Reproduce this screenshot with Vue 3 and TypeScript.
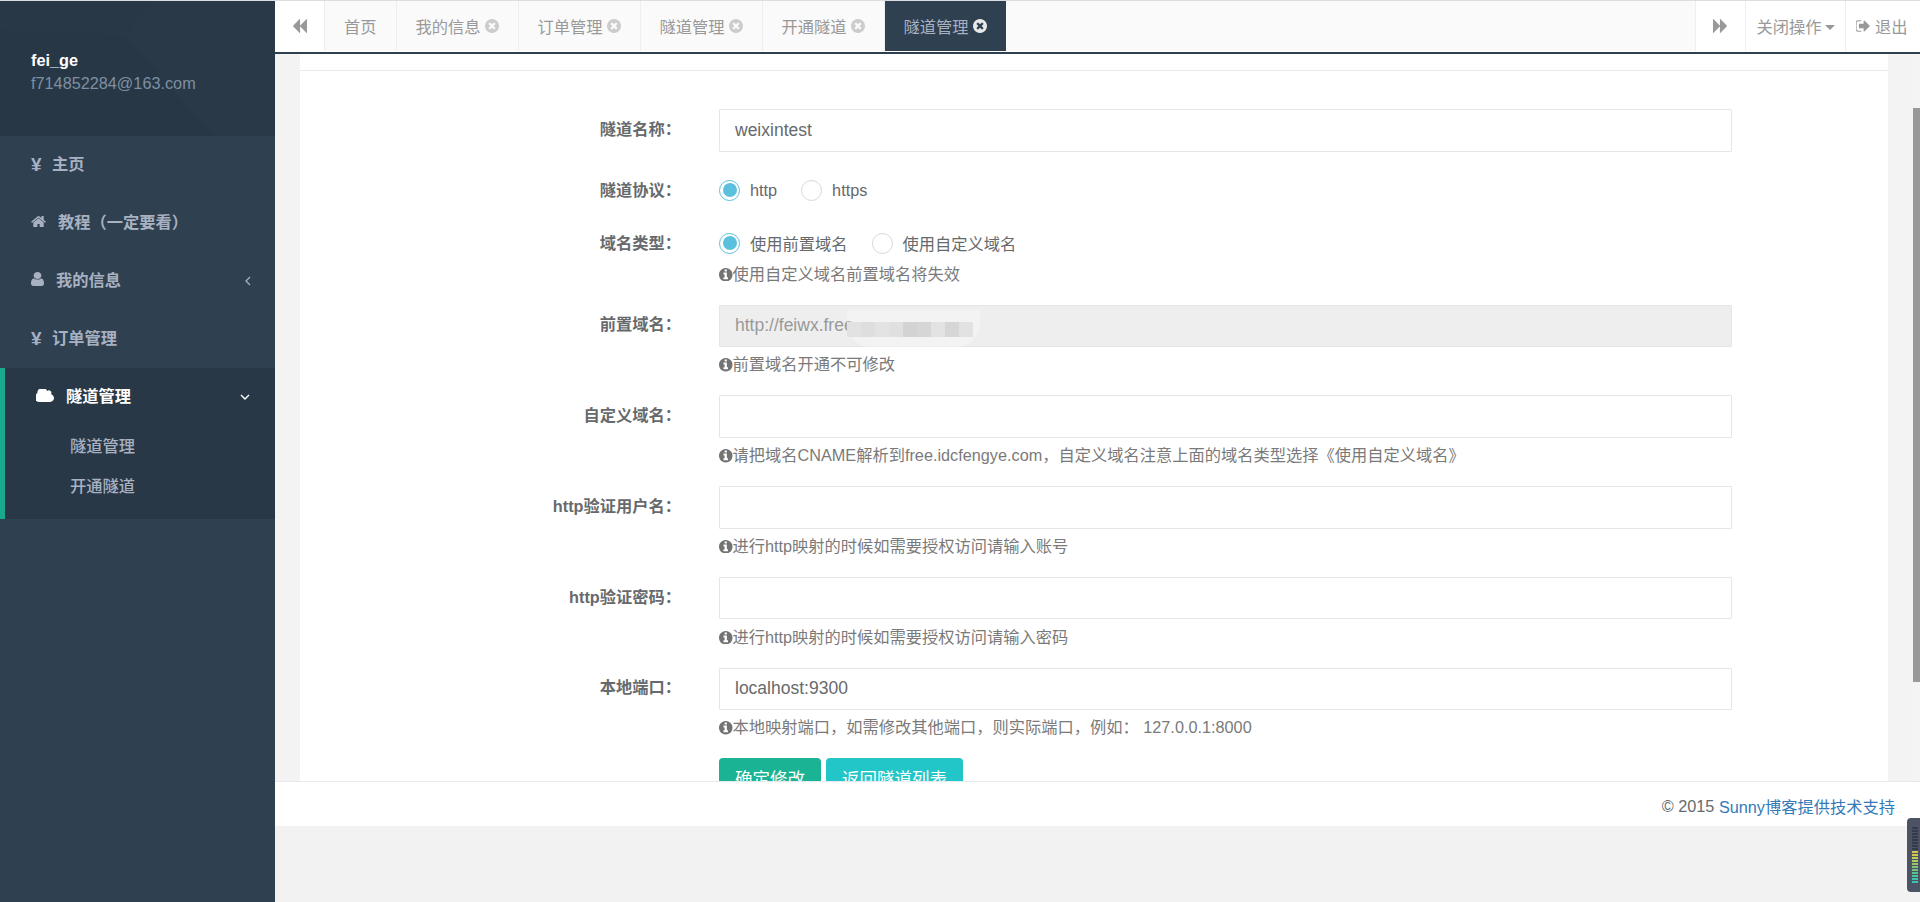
<script setup lang="ts">
interface Tab { label: string; closable: boolean; active?: boolean }
const tabs: Tab[] = [
  { label: '首页', closable: false },
  { label: '我的信息', closable: true },
  { label: '订单管理', closable: true },
  { label: '隧道管理', closable: true },
  { label: '开通隧道', closable: true },
  { label: '隧道管理', closable: true, active: true },
]
const mosaic = ['#e2e2e2', '#dedede', '#e3e3e3', '#e0e0e0', '#d3d3d3', '#d6d6d6', '#e3e3e3', '#d6d6d6', '#e2e2e2']
const leds = ['#333a4a','#333a4a','#333a4a','#333a4a','#333a4a','#333a4a','#333a4a','#333a4a','#d8c44a','#d4c84e','#c7cc55','#aecb5d','#98c668','#84c474','#70c280','#5cc28c','#4cc39a','#40c4a8','#35c5b0']
const I = {
  close: 'M1277 1122q0-26-19-45l-181-181 181-181q19-19 19-45 0-27-19-46l-90-90q-19-19-46-19-26 0-45 19l-181 181-181-181q-19-19-45-19-27 0-46 19l-90 90q-19 19-19 46 0 26 19 45l181 181-181 181q-19 19-19 45 0 27 19 46l90 90q19 19 46 19 26 0 45-19l181-181 181 181q19 19 45 19 27 0 46-19l90-90q19-19 19-46zm387-226q0 209-103 385.5t-279.5 279.5-385.5 103-385.5-103-279.5-279.5-103-385.5 103-385.5 279.5-279.5 385.5-103 385.5 103 279.5 279.5 103 385.5z',
  info: 'M1152 1376v-160q0-14-9-23t-23-9h-96v-512q0-14-9-23t-23-9h-320q-14 0-23 9t-9 23v160q0 14 9 23t23 9h96v320h-96q-14 0-23 9t-9 23v160q0 14 9 23t23 9h448q14 0 23-9t9-23zm-128-896v-160q0-14-9-23t-23-9h-192q-14 0-23 9t-9 23v160q0 14 9 23t23 9h192q14 0 23-9t9-23zm640 416q0 209-103 385.5t-279.5 279.5-385.5 103-385.5-103-279.5-279.5-103-385.5 103-385.5 279.5-279.5 385.5-103 385.5 103 279.5 279.5 103 385.5z',
  home: 'M1472 992v480q0 26-19 45t-45 19h-384v-384h-256v384h-384q-26 0-45-19t-19-45v-480q0-1 .5-3t.5-3l575-474 575 474q1 2 1 6zm223-69l-62 74q-8 9-21 11h-3q-13 0-21-7l-692-577-692 577q-12 8-24 7-13-2-21-11l-62-74q-8-10-7-23.5t11-22.5l719-599q32-26 76-26t76 26l244 204v-195q0-14 9-23t23-9h192q14 0 23 9t9 23v408l219 182q10 8 11 21.5t-7 23.5z',
  user: 'M1536 1399q0 109-62.5 187t-150.5 78h-854q-88 0-150.5-78t-62.5-187q0-85 8.5-160.5t31.5-152 58.5-131 94-89 134.5-34.5q131 128 313 128t313-128q76 0 134.5 34.5t94 89 58.5 131 31.5 152 8.5 160.5zm-256-887q0 159-112.5 271.5t-271.5 112.5-271.5-112.5-112.5-271.5 112.5-271.5 271.5-112.5 271.5 112.5 112.5 271.5z',
  cloud: 'M1856 1152q0 159-112.5 271.5t-271.5 112.5h-1088q-185 0-316.5-131.5t-131.5-316.5q0-132 71-241.5t187-163.5q-2-28-2-43 0-212 150-362t362-150q158 0 286.5 88t187.5 230q70-62 166-62 106 0 181 75t75 181q0 75-41 138 129 30 213 134.5t84 239.5z',
  back: 'M1683 141q19-19 32-13t13 32v1472q0 26-13 32t-32-13l-710-710q-9-9-13-19v710q0 26-13 32t-32-13l-710-710q-19-19-19-45t19-45l710-710q19-19 32-13t13 32v710q4-10 13-19z',
  forward: 'M109 1651q-19 19-32 13t-13-32v-1472q0-26 13-32t32 13l710 710q9 9 13 19v-710q0-26 13-32t32 13l710 710q19 19 19 45t-19 45l-710 710q-19 19-32 13t-13-32v-710q-4 10-13 19z',
  signout: 'M704 1440q0 4 1 20t.5 26.5-3 23.5-10 19.5-20.5 6.5h-320q-119 0-203.5-84.5t-84.5-203.5v-704q0-119 84.5-203.5t203.5-84.5h320q13 0 22.5 9.5t9.5 22.5q0 4 1 20t.5 26.5-3 23.5-10 19.5-20.5 6.5h-320q-66 0-113 47t-47 113v704q0 66 47 113t113 47h312l11.5 1 11.5 3 8 5.5 7 9 2 13.5zm928-544q0 26-19 45l-544 544q-19 19-45 19t-45-19-19-45v-288h-448q-26 0-45-19t-19-45v-384q0-26 19-45t45-19h448v-288q0-26 19-45t45-19 45 19l544 544q19 19 19 45z',
}
</script>

<template>
  <div class="root">
    <aside class="sidebar">
      <div class="profile">
        <svg class="profile-bg" viewBox="0 0 275 135" preserveAspectRatio="none" aria-hidden="true">
          <polygon points="125,35 150,0 275,0 275,135 213,135" fill="#2a3947" />
          <polygon points="0,30 125,35 213,135 0,135" fill="#283745" />
          <polygon points="0,0 150,0 125,35 0,30" fill="#293846" />
        </svg>
        <div class="name">fei_ge</div>
        <div class="email">f714852284@163.com</div>
      </div>
      <nav>
        <a class="nav-item"><span class="yen">¥</span>主页</a>
        <a class="nav-item"><svg class="ic ic-home" viewBox="64 256 1664 1280" preserveAspectRatio="none"><path :d="I.home" /></svg>教程（一定要看）</a>
        <a class="nav-item"><svg class="ic ic-user" viewBox="256 128 1280 1536" preserveAspectRatio="none"><path :d="I.user" /></svg>我的信息
          <svg class="arrow" viewBox="0 0 6 10"><polyline points="5,1 1,5 5,9" /></svg>
        </a>
        <a class="nav-item"><span class="yen">¥</span>订单管理</a>
        <div class="group">
          <a class="nav-item current"><svg class="ic ic-cloud" viewBox="64 256 1792 1280" preserveAspectRatio="none"><path :d="I.cloud" /></svg>隧道管理
            <svg class="arrow-down" viewBox="0 0 10 6"><polyline points="1,1 5,5 9,1" /></svg>
          </a>
          <a class="sub">隧道管理</a>
          <a class="sub">开通隧道</a>
        </div>
      </nav>
    </aside>

    <div class="main">
      <header class="topbar">
        <button class="tb-btn tb-back" type="button"><svg class="tb-ic" viewBox="64 128 1664 1536" preserveAspectRatio="none"><path :d="I.back" /></svg></button>
        <div class="tabs">
          <a v-for="(t, i) in tabs" :key="i" class="tab" :class="{ active: t.active }">
            {{ t.label }}
            <svg v-if="t.closable" class="tab-x" viewBox="128 128 1536 1536"><path :d="I.close" /></svg>
          </a>
        </div>
        <button class="tb-btn tb-fwd" type="button"><svg class="tb-ic" viewBox="64 128 1664 1536" preserveAspectRatio="none"><path :d="I.forward" /></svg></button>
        <button class="tb-btn tb-ops" type="button">关闭操作<i class="caret"></i></button>
        <button class="tb-btn tb-out" type="button"><svg class="out-ic" viewBox="128 256 1536 1280"><path :d="I.signout" /></svg>退出</button>
      </header>

      <div class="content">
        <div class="panel">
          <div class="panel-top"></div>
          <form class="form" @submit.prevent>
            <div class="row">
              <label>隧道名称：</label>
              <div class="field"><input type="text" value="weixintest" /></div>
            </div>
            <div class="row">
              <label>隧道协议：</label>
              <div class="field radios first">
                <span class="radio on"></span><span class="rt">http</span>
                <span class="radio"></span><span class="rt">https</span>
              </div>
            </div>
            <div class="row">
              <label class="tight">域名类型：</label>
              <div class="field">
                <div class="radios second">
                  <span class="radio on"></span><span class="rt">使用前置域名</span>
                  <span class="radio"></span><span class="rt">使用自定义域名</span>
                </div>
                <p class="hint"><svg class="hi" viewBox="128 128 1536 1536"><path :d="I.info" /></svg>使用自定义域名前置域名将失效</p>
              </div>
            </div>
            <div class="row">
              <label>前置域名：</label>
              <div class="field">
                <div class="masked">
                  <input type="text" value="http://feiwx.free" disabled />
                  <div class="blur">
                    <span v-for="(c, i) in mosaic" :key="i" :style="{ background: c }"></span>
                  </div>
                </div>
                <p class="hint"><svg class="hi" viewBox="128 128 1536 1536"><path :d="I.info" /></svg>前置域名开通不可修改</p>
              </div>
            </div>
            <div class="row">
              <label>自定义域名：</label>
              <div class="field">
                <input type="text" />
                <p class="hint"><svg class="hi" viewBox="128 128 1536 1536"><path :d="I.info" /></svg>请把域名CNAME解析到free.idcfengye.com，自定义域名注意上面的域名类型选择《使用自定义域名》</p>
              </div>
            </div>
            <div class="row">
              <label>http验证用户名：</label>
              <div class="field">
                <input type="text" />
                <p class="hint"><svg class="hi" viewBox="128 128 1536 1536"><path :d="I.info" /></svg>进行http映射的时候如需要授权访问请输入账号</p>
              </div>
            </div>
            <div class="row">
              <label>http验证密码：</label>
              <div class="field">
                <input type="text" />
                <p class="hint"><svg class="hi" viewBox="128 128 1536 1536"><path :d="I.info" /></svg>进行http映射的时候如需要授权访问请输入密码</p>
              </div>
            </div>
            <div class="row">
              <label>本地端口：</label>
              <div class="field">
                <input type="text" value="localhost:9300" />
                <p class="hint"><svg class="hi" viewBox="128 128 1536 1536"><path :d="I.info" /></svg>本地映射端口，如需修改其他端口，则实际端口，例如： 127.0.0.1:8000</p>
              </div>
            </div>
            <div class="row">
              <span></span>
              <div class="actions">
                <button class="btn primary" type="button">确定修改</button>
                <button class="btn info" type="button">返回隧道列表</button>
              </div>
            </div>
          </form>
        </div>
        <div class="scroll-track"><div class="scroll-thumb"></div></div>
      </div>

      <footer class="footer">© 2015&nbsp;<a>Sunny博客提供技术支持</a></footer>
      <div class="rest"></div>
    </div>

    <div class="widget">
      <span v-for="(c, i) in leds" :key="i" :style="{ background: c }"></span>
    </div>
  </div>
</template>

<style>
html, body { margin: 0; padding: 0; overflow: hidden; }
</style>

<style scoped>
.root {
  position: relative;
  display: flex;
  width: 1920px;
  height: 902px;
  box-sizing: border-box;
  border-top: 1px solid #dcdde1;
  overflow: hidden;
  background: #f3f3f4;
  font-family: "Liberation Sans", "Noto Sans CJK SC", sans-serif;
  font-size: 16.25px;
  color: #676a6c;
}
/* Sidebar */
.sidebar { flex: 0 0 275px; background: #2f4050; }
.profile {
  position: relative;
  height: 135px;
  box-sizing: border-box;
  padding: 48px 0 0 31px;
  background: #293846;
  line-height: 23px;
  overflow: hidden;
}
.profile-bg { position: absolute; inset: 0; width: 100%; height: 100%; }
.name, .email { position: relative; }
.name { color: #fff; font-weight: 700; }
.email { color: #7d8fa3; }
.nav-item {
  position: relative;
  display: flex;
  align-items: center;
  height: 58px;
  box-sizing: border-box;
  padding: 0 0 5px 31px;
  color: #a7b1c2;
  font-weight: 600;
}
.yen { width: 21px; margin-top: 3px; font-size: 19px; font-weight: 700; line-height: 1; }
.ic { fill: #a7b1c2; flex: none; margin-top: 2px; }
.ic-home { width: 15px; height: 11.5px; margin-right: 12px; }
.ic-user { width: 13px; height: 14px; margin-right: 12px; margin-top: 1px; }
.ic-cloud { width: 18px; height: 13px; margin-right: 12px; fill: #fff; }
.arrow { position: absolute; left: 245px; top: 24px; width: 6px; height: 10px; fill: none; stroke: #a7b1c2; stroke-width: 1.3; }
.group {
  height: 151px;
  background: #293846;
  border-left: 5px solid #19aa8d;
  box-sizing: border-box;
}
.group .nav-item.current { color: #fff; }
.arrow-down { position: absolute; left: 235px; top: 26px; width: 10px; height: 6px; fill: none; stroke: #fff; stroke-width: 1.4; }
.sub {
  display: block;
  height: 40px;
  line-height: 40px;
  padding-left: 65px;
  color: #a7b1c2;
  font-weight: 500;
}
/* Main */
.main { flex: 1; min-width: 0; display: flex; flex-direction: column; }
.topbar {
  flex: none;
  display: flex;
  height: 53px;
  box-sizing: border-box;
  border-bottom: 2px solid #2f4050;
  background: #fff;
}
.tb-btn {
  flex: none;
  height: 50px;
  padding: 0;
  border: 0;
  background: #fff;
  color: #999;
  font: inherit;
  display: flex;
  align-items: center;
  justify-content: center;
  box-sizing: border-box;
}
.tb-back { width: 49px; }
.tb-fwd { width: 50px; border-left: 1px solid #eee; }
.tb-ops { width: 100px; border-left: 1px solid #eee; }
.tb-out { width: 75px; border-left: 1px solid #eee; justify-content: flex-start; padding-left: 10px; }
.tb-ic { width: 15px; height: 14px; fill: #999; }
.out-ic { width: 14px; height: 12px; fill: #999; margin-right: 5px; }
.caret {
  margin-left: 3px;
  margin-top: 3px;
  border-top: 5px solid #999;
  border-left: 5px solid transparent;
  border-right: 5px solid transparent;
}
.tabs { flex: 1; display: flex; background: #fafafa; height: 50px; border-left: 1px solid #eee; }
.tab {
  display: flex;
  align-items: center;
  gap: 4px;
  padding: 0 19px;
  color: #999;
  border-right: 1px solid #eee;
  white-space: nowrap;
  box-sizing: border-box;
}
.tab-x { width: 14px; height: 14px; fill: #ccc; }
.tab.active { background: #2f4050; color: #a7b1c2; border-right: 0; }
.tab.active .tab-x { fill: #e8e8e8; }
/* Content */
.content {
  position: relative;
  flex: none;
  height: 727px;
  padding: 0 32px 0 25px;
  overflow: hidden;
}
.panel { background: #fff; height: 100%; overflow: hidden; }
.panel-top { height: 16px; border-bottom: 1px solid #e7eaec; }
.form { padding-top: 38px; }
.row {
  display: grid;
  grid-template-columns: 381px 1013px;
  column-gap: 38px;
  margin-bottom: 18.75px;
}
.row > label {
  padding-top: 8.75px;
  text-align: right;
  font-weight: 700;
  line-height: 23.2px;
}
.row > label.tight { padding-top: 5px; }
.field { min-width: 0; }
input {
  display: block;
  width: 100%;
  height: 42.5px;
  box-sizing: border-box;
  padding: 0 15px;
  border: 1px solid #e5e6e7;
  border-radius: 1px;
  background: #fff;
  color: #676a6c;
  font: inherit;
  font-size: 17.5px;
  outline: none;
}
input:disabled { background: #eee; color: #999; }
.masked { position: relative; }
.blur {
  position: absolute;
  left: 128px;
  top: 5px;
  width: 133px;
  height: 38px;
  border-radius: 0 0 26px 26px;
  background: rgba(255, 255, 255, 0.3);
  display: flex;
  align-items: flex-start;
  padding-top: 12px;
  box-sizing: border-box;
}
.blur span { width: 14px; height: 15px; }
.radios { display: flex; align-items: center; }
.radios.first { height: 37.5px; padding-top: 2px; box-sizing: border-box; }
.radios.second { height: 30px; padding-top: 3px; box-sizing: border-box; }
.radio {
  flex: none;
  position: relative;
  width: 21px;
  height: 21px;
  box-sizing: border-box;
  border: 1px solid #d8d8d8;
  border-radius: 50%;
  background: #fff;
}
.radio.on { border-color: #5bc0de; }
.radio.on::after {
  content: "";
  position: absolute;
  inset: 2.5px;
  border-radius: 50%;
  background: #5bc0de;
}
.rt { margin: 0 24px 0 10px; color: #676a6c; }
.hint {
  margin: 6.25px 0 0;
  line-height: 23.2px;
  color: #7a7a7a;
  white-space: nowrap;
}
.hi { display: inline-block; width: 13.5px; height: 13.5px; fill: #737373; vertical-align: -1.5px; }
.actions { display: flex; gap: 5px; }
.btn {
  height: 42.5px;
  padding: 0 16px 3px;
  border: 0;
  border-radius: 4px;
  color: #fff;
  font: inherit;
  font-size: 17.5px;
}
.primary { background: #1ab394; }
.info { background: #23c6c8; }
.scroll-track { position: absolute; right: 0; top: 0; bottom: 0; width: 7px; background: #f4f4f4; }
.scroll-thumb { margin-top: 54px; height: 574px; background: #999; }
.footer {
  flex: none;
  height: 45px;
  box-sizing: border-box;
  border-top: 1px solid #e7eaec;
  background: #fff;
  padding: 4px 25px 0 0;
  display: flex;
  align-items: center;
  justify-content: flex-end;
}
.footer a { color: #337ab7; }
.rest { flex: 1; background: #f2f2f2; }
.widget {
  position: absolute;
  right: 0;
  top: 817px;
  width: 13px;
  height: 74px;
  box-sizing: border-box;
  padding: 9px 2px 0 5px;
  background: #4b5365;
  border-radius: 4px 0 0 4px;
  display: flex;
  flex-direction: column;
  gap: 1.5px;
}
.widget span { height: 1.5px; flex: none; }
</style>
